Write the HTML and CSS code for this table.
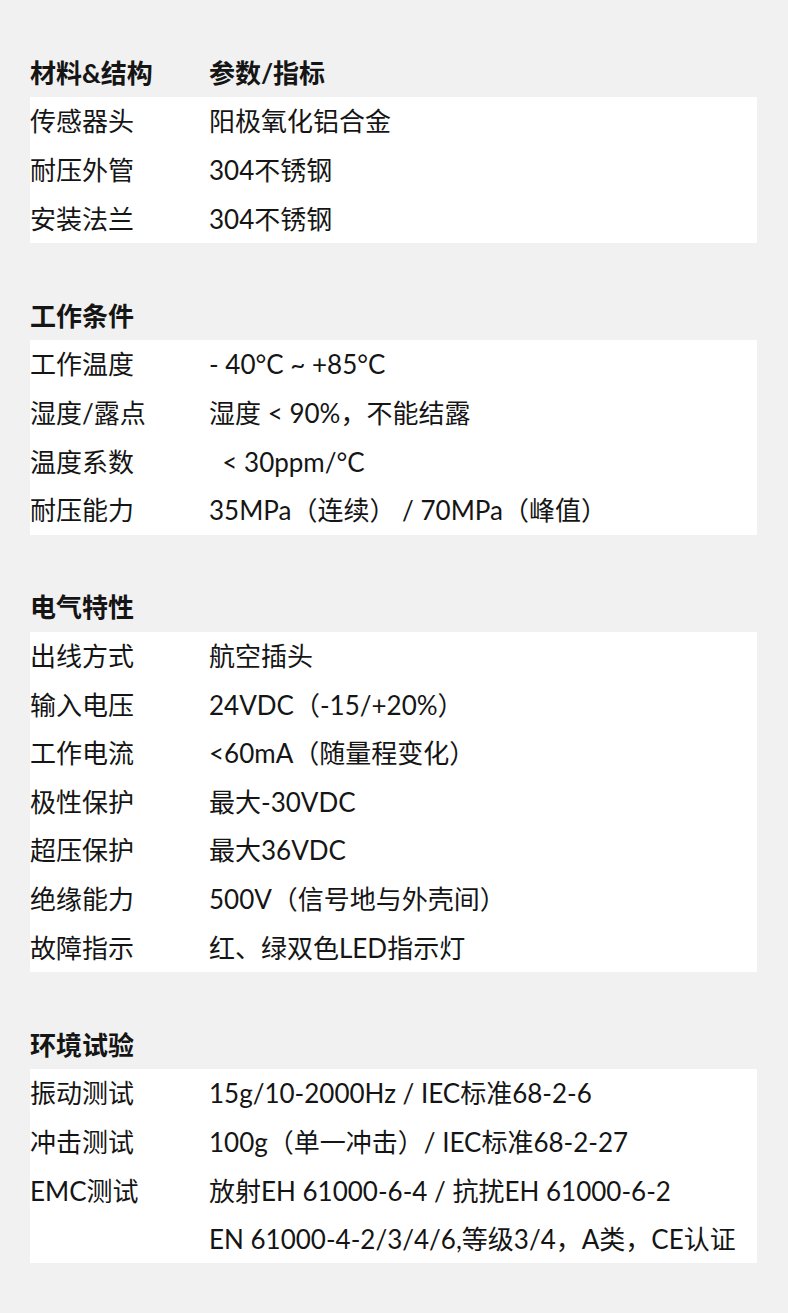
FILE: index.html
```html
<!DOCTYPE html>
<html lang="zh-CN">
<head>
<meta charset="utf-8">
<title>参数表</title>
<link rel="stylesheet" href="styles.css">
</head>
<body>
<main class="sheet">
  <section class="sec">
    <div class="row head"><span>材料&amp;结构</span><span>参数/指标</span></div>
    <div class="rows">
      <div class="row"><span>传感器头</span><span>阳极氧化铝合金</span></div>
      <div class="row"><span>耐压外管</span><span>304不锈钢</span></div>
      <div class="row"><span>安装法兰</span><span>304不锈钢</span></div>
    </div>
  </section>
  <section class="sec">
    <div class="row head"><span>工作条件</span><span></span></div>
    <div class="rows">
      <div class="row"><span>工作温度</span><span>- 40°C ~ +85°C</span></div>
      <div class="row"><span>湿度/露点</span><span>湿度 &lt; 90%，不能结露</span></div>
      <div class="row"><span>温度系数</span><span>&nbsp; &lt; 30ppm/°C</span></div>
      <div class="row"><span>耐压能力</span><span>35MPa（连续） / 70MPa（峰值）</span></div>
    </div>
  </section>
  <section class="sec">
    <div class="row head"><span>电气特性</span><span></span></div>
    <div class="rows">
      <div class="row"><span>出线方式</span><span>航空插头</span></div>
      <div class="row"><span>输入电压</span><span>24VDC（-15/+20%）</span></div>
      <div class="row"><span>工作电流</span><span>&lt;60mA（随量程变化）</span></div>
      <div class="row"><span>极性保护</span><span>最大-30VDC</span></div>
      <div class="row"><span>超压保护</span><span>最大36VDC</span></div>
      <div class="row"><span>绝缘能力</span><span>500V（信号地与外壳间）</span></div>
      <div class="row"><span>故障指示</span><span>红、绿双色LED指示灯</span></div>
    </div>
  </section>
  <section class="sec">
    <div class="row head"><span>环境试验</span><span></span></div>
    <div class="rows">
      <div class="row"><span>振动测试</span><span>15g/10-2000Hz / IEC标准68-2-6</span></div>
      <div class="row"><span>冲击测试</span><span>100g（单一冲击）/ IEC标准68-2-27</span></div>
      <div class="row"><span>EMC测试</span><span>放射EH 61000-6-4 / 抗扰EH 61000-6-2</span></div>
      <div class="row"><span></span><span>EN 61000-4-2/3/4/6,等级3/4，A类，CE认证</span></div>
    </div>
  </section>
</main>
</body>
</html>
```
FILE: styles.css
```css
html, body {
  margin: 0;
  padding: 0;
  background: #f1f1f1;
}
body {
  font-family: Lato, "Noto Sans CJK SC", sans-serif;
  font-size: 26px;
  color: #151515;
}
.sheet {
  padding: 48.6px 31px 48px 30px;
  display: flex;
  flex-direction: column;
  gap: 48.6px;
}
.rows {
  background: #ffffff;
}
.row {
  display: grid;
  grid-template-columns: 179px 1fr;
  align-items: center;
  height: 48.6px;
  white-space: nowrap;
  line-height: 1;
}
.head {
  font-weight: 700;
}
```
